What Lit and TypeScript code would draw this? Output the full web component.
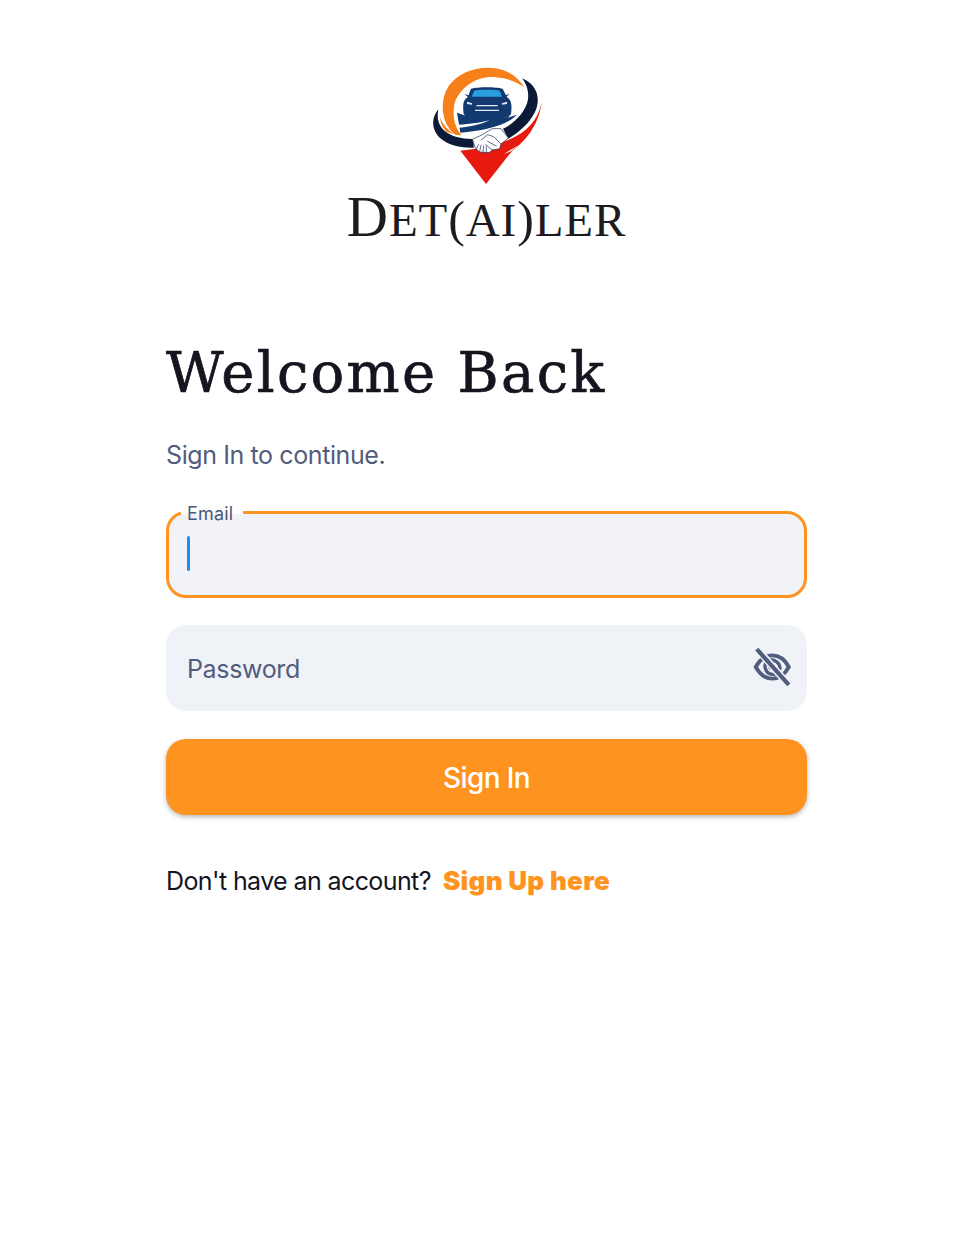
import { LitElement, html, css } from "lit";
import { customElement } from "lit/decorators.js";

@customElement("app-root")
export class AppRoot extends LitElement {
  static styles = css`
    :host { display: block; height: 1238px; background: #fff; font-family: "Inter", "Noto Sans", sans-serif; }
    .page { width: 641px; margin-left: 166px; display: flex; flex-direction: column; }
    .logo { display: flex; flex-direction: column; align-items: center; padding-top: 60px; height: 181px; }
    .logo svg { width: 130px; height: 130px; display: block; flex: none; }
    .wordmark { font-family: "Liberation Serif", serif; font-size: 57px; line-height: 56px; margin-top: -1px; color: #1c1c20; white-space: nowrap; letter-spacing: 0.9px; }
    .wordmark span { font-size: 47px; }
    .wordmark .paren { font-size: 50px; font-weight: 400; }
    h1 { margin: 96px 0 0; font-family: "DejaVu Serif", serif; font-weight: 400; font-size: 56px; line-height: 72px; color: #14151f; letter-spacing: 2.3px; -webkit-text-stroke: 0.7px #14151f; white-space: nowrap; }
    .sub { margin: 28px 0 0; font-size: 25px; line-height: 36px; color: #525d7d; letter-spacing: -0.4px; }
    .field { position: relative; box-sizing: border-box; height: 86px; border-radius: 20px; display: flex; align-items: center; padding: 0 14px 0 21px; }
    .email { height: 87px; margin-top: 38px; background: #f2f3f8; border: 3px solid #ff9320; padding-left: 18px; }
    .email label { position: absolute; left: 12px; top: -12px; padding: 0 10px 0 6px; font-size: 18px; line-height: 24px; color: #4c5676; letter-spacing: 0.2px; background: linear-gradient(#fff 0 12px, #f2f3f8 12px); }
    .caret { width: 3px; height: 35px; border-radius: 2px; background: #1a8ff0; margin-top: -3px; }
    .password { margin-top: 27px; background: #eff2f7; justify-content: space-between; font-size: 25px; color: #525d7d; letter-spacing: -0.35px; }
    .password span { padding-top: 2px; }
    .password svg { width: 42px; height: 42px; display: block; margin-top: -3px; }
    button { margin-top: 28px; height: 76px; border: 0; border-radius: 20px; background: #ff9320; color: #fff; font: 500 28px "Inter", sans-serif; letter-spacing: -0.6px; box-shadow: 0 2px 5px rgba(0,0,0,.28); padding: 2px 0 0; }
    .foot { margin: 48px 0 0; font-size: 25px; line-height: 36px; color: #14151f; letter-spacing: -0.6px; display: flex; gap: 12px; }
    .foot a { color: #ff9320; font-weight: 900; font-size: 26px; letter-spacing: 0.3px; text-decoration: none; }
  `;

  render() {
    return html`<div class="page">
      <div class="logo">
        <svg viewBox="3 0 390 390" aria-label="Detailer logo">
          <path fill="#e8190f" d="M118 272 L195 372 L274 272 C310 245 352 200 362 128 C350 180 320 215 262 240 L200 262 Z"/>
          <path fill="#fff" d="M248 282 L292 256 L270 274 Z"/>
          <path fill="#f7801a" d="M102 224 C60 190 54 122 83 78 C118 28 200 8 260 36 C282 46 298 62 310 82 C285 64 260 55 225 52 C172 46 122 78 102 125 C92 165 100 200 122 226 Z"/>
          <path fill="#f7801a" d="M56 168 C62 190 78 206 98 222 L78 216 C64 204 58 186 56 168 Z"/>
          <path fill="#0c1a38" d="M303 55 C345 72 362 112 342 156 C324 192 292 218 262 236 L246 206 C282 190 316 152 321 118 C324 92 316 72 303 55 Z"/>
          <path fill="#0c1a38" d="M52 148 C27 178 33 218 66 241 C92 259 124 264 158 263 L158 237 C124 238 92 230 72 214 C54 198 46 176 52 148 Z"/>
          <path fill="#133a70" d="M150 86 C170 80 225 80 245 86 L258 112 C270 118 274 132 270 162 L262 172 L136 172 L128 162 C124 132 128 118 140 112 Z"/>
          <path fill="#2a9fe0" d="M160 92 C175 88 220 88 236 92 L243 110 L152 110 Z"/>
          <path fill="#133a70" d="M130 102 L143 106 L141 111 Z M266 102 L253 106 L255 111 Z"/>
          <path fill="#dfe8f4" d="M138 125 L154 130 L152 134 L138 132 Z M258 125 L242 130 L244 134 L258 132 Z M166 135 H230 V139 H166 Z M162 149 H234 V153 H162 Z"/>
          <path fill="#133a70" d="M108 158 L136 168 L264 172 L288 164 C258 196 190 212 118 218 Z"/>
          <path fill="#fff" d="M112 194 C150 192 180 188 206 180 C190 190 150 200 115 203 Z"/>
          <path fill="#fff" stroke="#16264a" stroke-width="2" stroke-linejoin="round" d="M154 238 L180 226 L214 206 L240 206 L262 234 L240 252 L236 266 L214 270 L204 278 L176 276 L164 266 Z"/>
          <path fill="none" stroke="#16264a" stroke-width="2" stroke-linecap="round" d="M180 240 L200 224 L218 230 L240 252 M200 244 L226 258 M194 254 L214 270 M172 254 L166 268 M180 256 L176 274 M188 258 L186 276 M196 260 L196 276"/>
        </svg>
        <div class="wordmark">D<span>ET</span><span class="paren">(</span><span>AI</span><span class="paren">)</span><span>LER</span></div>
      </div>
      <h1>Welcome Back</h1>
      <p class="sub">Sign In to continue.</p>
      <div class="field email"><label>Email</label><div class="caret"></div></div>
      <div class="field password">
        <span>Password</span>
        <svg viewBox="0 0 40 40" fill="none" stroke="#525d7d" stroke-linecap="round">
          <path stroke-width="3.6" d="M4.5 20 C9 12 14.5 9 20.5 9 C27 9 32 12.500 36 20 C32 27.500 27 31 20.500 31 C14.500 31 9 28 4.500 20 Z"/>
          <path stroke-width="3.2" d="M14 16 C12 21 15 27 21 27 C24 27 26 26 27 24 M16 13.500 C22 12 28 16 27.500 22"/>
          <circle cx="19" cy="20" r="2.500" fill="#525d7d" stroke="none"/>
          <path stroke="#eff2f7" stroke-width="7" d="M7 4 L35 36"/>
          <path stroke-width="4" stroke-linecap="butt" d="M5.500 3 L36 37"/>
        </svg>
      </div>
      <button>Sign In</button>
      <p class="foot"><span>Don't have an account?</span><a href="#">Sign Up here</a></p>
    </div>`;
  }
}
